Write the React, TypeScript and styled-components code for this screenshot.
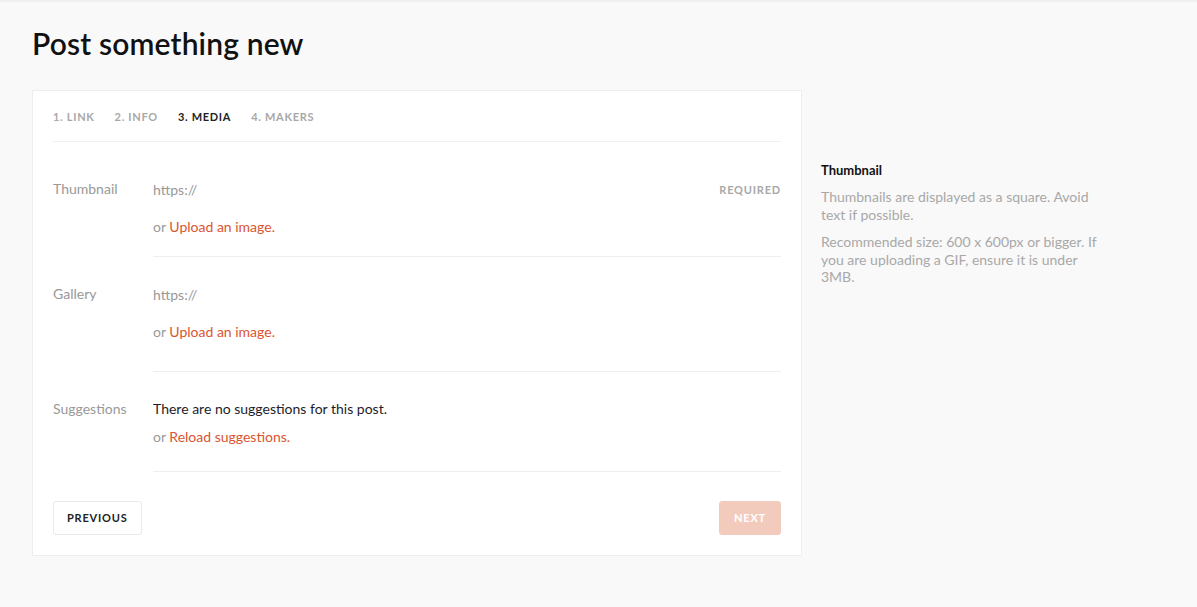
import React from "react";
import styled, { createGlobalStyle } from "styled-components";

const Global = createGlobalStyle`
  html, body { margin: 0; padding: 0; background: #f9f9f9; }
  body { font-family: Lato, "Open Sans", sans-serif; color: #333; -webkit-font-smoothing: antialiased; }
  * { box-sizing: border-box; }
`;

const Page = styled.div`
  min-height: 607px;
  border-top: 2px solid #f0f0f0;
  padding: 0 32px;
`;

const Title = styled.h1`
  margin: 0;
  padding-top: 21px;
  height: 88px;
  font-size: 30px;
  line-height: 40px;
  font-weight: 600;
  color: #111;
  letter-spacing: 0.15px;
`;

const Layout = styled.div`
  display: flex;
  align-items: flex-start;
  gap: 19px;
`;

const Card = styled.div`
  width: 770px;
  background: #fff;
  border: 1px solid #eeeeee;
  padding: 0 20px 20px;
`;

const Tabs = styled.div`
  display: flex;
  gap: 20px;
  padding: 19px 0 17px;
  border-bottom: 1px solid #f0f0f0;
`;

const Tab = styled.span<{ $active?: boolean }>`
  font-size: 11px;
  line-height: 14px;
  font-weight: 700;
  letter-spacing: 0.7px;
  text-transform: uppercase;
  color: ${(p) => (p.$active ? "#222" : "#a8a8a8")};
`;

const Fields = styled.div`
  padding-top: 10px;
`;

const Row = styled.div`
  display: grid;
  grid-template-columns: 100px 1fr;
`;

const Label = styled.div<{ $top: number }>`
  font-size: 14px;
  line-height: 18px;
  color: #999;
  padding-top: ${(p) => p.$top}px;
`;

const Content = styled.div<{ $top: number; $bottom: number }>`
  padding: ${(p) => p.$top}px 0 ${(p) => p.$bottom}px;
  border-bottom: 1px solid #eeeeee;
`;

const InputLine = styled.div`
  display: flex;
  align-items: center;
  justify-content: space-between;
  height: 36px;
  margin-top: -9px;
`;

const Placeholder = styled.span`
  font-size: 14px;
  color: #999;
`;

const Required = styled.span`
  font-size: 11px;
  font-weight: 700;
  letter-spacing: 0.8px;
  color: #a8a8a8;
`;

const Hint = styled.div<{ $gap: number }>`
  margin-top: ${(p) => p.$gap}px;
  font-size: 14px;
  line-height: 18px;
  color: #999;
`;

const Link = styled.a`
  color: #da552f;
  text-decoration: none;
  cursor: pointer;
`;

const Message = styled.div`
  font-size: 14px;
  line-height: 18px;
  color: #1d1d2b;
`;

const Actions = styled.div`
  display: flex;
  justify-content: space-between;
  margin-top: 29px;
`;

const Button = styled.button<{ $primary?: boolean }>`
  height: 34px;
  padding: 0 ${(p) => (p.$primary ? 14 : 13)}px 2px;
  border-radius: 3px;
  border: 1px solid ${(p) => (p.$primary ? "#f3cbbd" : "#eaeaea")};
  background: ${(p) => (p.$primary ? "#f3cbbd" : "#fff")};
  color: ${(p) => (p.$primary ? "#fff" : "#222")};
  font-family: inherit;
  font-size: 11px;
  font-weight: 700;
  letter-spacing: 0.8px;
  text-transform: uppercase;
`;

const Side = styled.aside`
  width: 290px;
  margin-top: 71px;
`;

const SideTitle = styled.div`
  font-size: 13px;
  line-height: 18px;
  font-weight: 700;
  color: #111;
  margin-bottom: 9px;
`;

const SideText = styled.p`
  margin: 0 0 10px;
  font-size: 14px;
  line-height: 17.5px;
  color: #a8a8a8;
`;

export default function App() {
  return (
    <>
      <Global />
      <Page>
        <Title>Post something new</Title>
        <Layout>
          <Card>
            <Tabs>
              <Tab>1. Link</Tab>
              <Tab>2. Info</Tab>
              <Tab $active>3. Media</Tab>
              <Tab>4. Makers</Tab>
            </Tabs>
            <Fields>
              <Row>
                <Label $top={28}>Thumbnail</Label>
                <Content $top={28} $bottom={20}>
                  <InputLine>
                    <Placeholder>https://</Placeholder>
                    <Required>REQUIRED</Required>
                  </InputLine>
                  <Hint $gap={11}>
                    or <Link>Upload an image.</Link>
                  </Hint>
                </Content>
              </Row>
              <Row>
                <Label $top={28}>Gallery</Label>
                <Content $top={28} $bottom={30}>
                  <InputLine>
                    <Placeholder>https://</Placeholder>
                  </InputLine>
                  <Hint $gap={11}>
                    or <Link>Upload an image.</Link>
                  </Hint>
                </Content>
              </Row>
              <Row>
                <Label $top={28}>Suggestions</Label>
                <Content $top={28} $bottom={25}>
                  <Message>There are no suggestions for this post.</Message>
                  <Hint $gap={10}>
                    or <Link>Reload suggestions.</Link>
                  </Hint>
                </Content>
              </Row>
            </Fields>
            <Actions>
              <Button>Previous</Button>
              <Button $primary>Next</Button>
            </Actions>
          </Card>
          <Side>
            <SideTitle>Thumbnail</SideTitle>
            <SideText>Thumbnails are displayed as a square. Avoid text if possible.</SideText>
            <SideText>Recommended size: 600 x 600px or bigger. If you are uploading a GIF, ensure it is under 3MB.</SideText>
          </Side>
        </Layout>
      </Page>
    </>
  );
}
